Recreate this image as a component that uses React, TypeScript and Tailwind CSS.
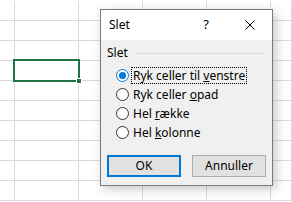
import React from "react";

const COLS = ["w-[15px]", "w-[64px]", "w-[64px]", "w-[64px]", "w-[64px]", "flex-1"];

function Radio({ checked }: { checked?: boolean }) {
  return (
    <span
      className={
        "flex size-[13px] shrink-0 items-center justify-center rounded-full border bg-white " +
        (checked ? "border-[#0078d7]" : "border-[#333333]")
      }
    >
      {checked && <span className="size-[7px] rounded-full bg-[#0078d7]" />}
    </span>
  );
}

function Option({
  checked,
  focused,
  children,
}: {
  checked?: boolean;
  focused?: boolean;
  children: React.ReactNode;
}) {
  return (
    <div className="flex h-[19px] items-center">
      <Radio checked={checked} />
      <span
        className={
          "ml-[2px] px-px leading-[15px] " +
          (focused ? "border border-dotted border-black" : "border border-transparent")
        }
      >
        {children}
      </span>
    </div>
  );
}

export default function App() {
  return (
    <div
      className="relative h-[202px] w-[292px] overflow-hidden bg-white text-[12px] text-black"
      style={{ fontFamily: '"Segoe UI", "Noto Sans", sans-serif' }}
    >
      {/* sheet grid */}
      <div className="flex flex-col pt-px">
        {Array.from({ length: 10 }).map((_, r) => (
          <div key={r} className="flex h-[20px] border-b border-[#d9d9d9]">
            {COLS.map((c, i) => (
              <div key={i} className={c + " h-full border-r border-[#d9d9d9]"} />
            ))}
          </div>
        ))}
      </div>

      {/* active cell */}
      <div className="absolute left-[13px] top-[59px] h-[23px] w-[67px] border-2 border-[#217346]" />
      <div className="absolute left-[76px] top-[78px] size-[6px] border border-white bg-[#217346]" />

      {/* dialog */}
      <div className="absolute left-[100px] top-[9px] flex h-[177px] w-[173px] flex-col border border-[#7a7a7a] bg-[#f0f0f0] shadow-[3px_3px_10px_rgba(0,0,0,0.22)]">
        <div className="flex h-[30px] items-center bg-white pl-[8px]">
          <span className="flex-1">Slet</span>
          <span className="mr-[36px] text-[13px]">?</span>
          <svg width="10" height="10" viewBox="0 0 10 10" className="mr-[17px]">
            <path d="M0.5 0.5L9.5 9.5M9.5 0.5L0.5 9.5" stroke="#000" strokeWidth="1" />
          </svg>
        </div>

        <div className="flex flex-1 flex-col px-[6px] pt-[4px]">
          <div className="flex items-center">
            <span>Slet</span>
            <span className="ml-[6px] h-px flex-1 bg-[#dcdcdc]" />
          </div>
          <div className="mt-[4px] flex flex-col pl-[9px]">
            <Option checked focused>
              Ryk celler til <u>v</u>enstre
            </Option>
            <Option>
              Ryk celler <u>o</u>pad
            </Option>
            <Option>
              Hel <u>r</u>ække
            </Option>
            <Option>
              Hel <u>k</u>olonne
            </Option>
          </div>
          <div className="mt-auto mb-[8px] flex justify-between">
            <button className="h-[22px] w-[74px] border-2 border-[#0078d7] bg-[#e1e1e1]">OK</button>
            <button className="h-[22px] w-[74px] border border-[#adadad] bg-[#e1e1e1]">Annuller</button>
          </div>
        </div>
      </div>
    </div>
  );
}
